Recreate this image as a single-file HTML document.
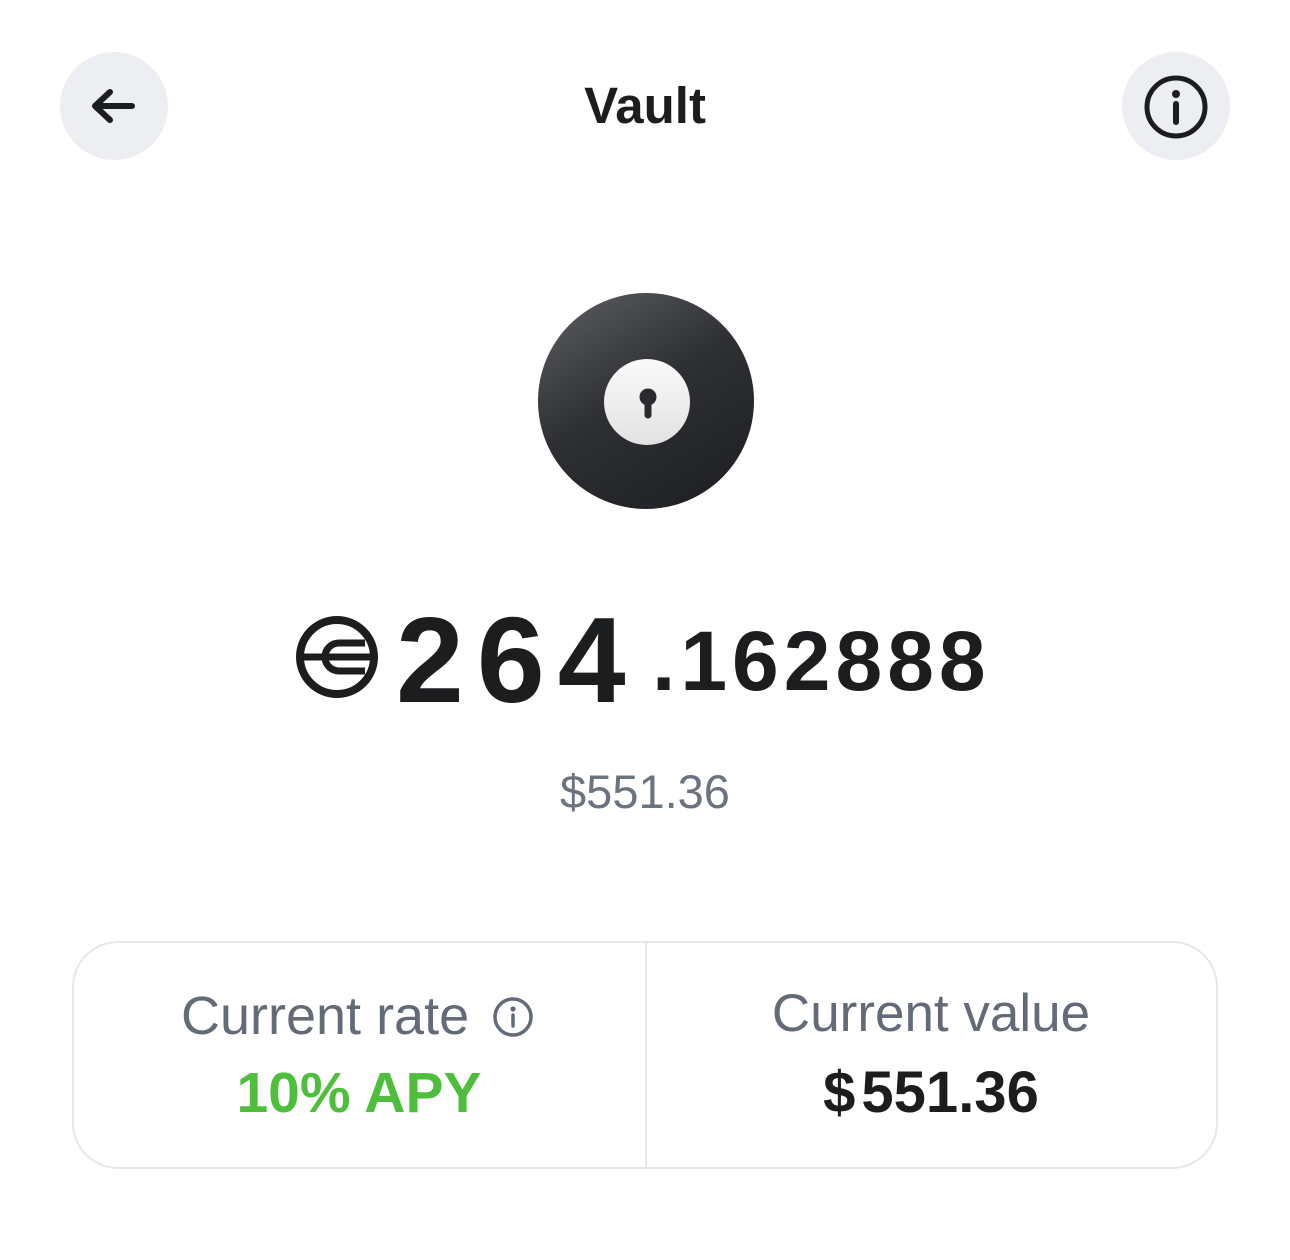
<!DOCTYPE html>
<html><head><style>
body{margin:0;width:1290px;height:1260px;background:#fff;position:relative;overflow:hidden;font-family:"Liberation Sans",sans-serif;color:#1c1d1f}
.a{position:absolute}
.t{position:absolute;white-space:nowrap;text-align:center}
</style></head><body>
<div class="a" style="left:60px;top:52px;width:108px;height:108px;border-radius:50%;background:#eceef1"></div>
<svg class="a" style="left:60px;top:52px" width="108" height="108"><path d="M35 54H72M50 40L35 54L50 68" fill="none" stroke="#1c1d1f" stroke-width="6" stroke-linecap="round" stroke-linejoin="round"/></svg>
<div class="a" style="left:1122px;top:52px;width:108px;height:108px;border-radius:50%;background:#eceef1"></div>
<svg class="a" style="left:1122px;top:52px" width="108" height="108"><circle cx="54" cy="55" r="29" fill="none" stroke="#1c1d1f" stroke-width="5"/><circle cx="54" cy="42" r="4" fill="#1c1d1f"/><path d="M54 52V70" stroke="#1c1d1f" stroke-width="6" stroke-linecap="round"/></svg>
<div class="t" style="left:0;width:1290px;top:76px;font-size:51px;font-weight:bold;line-height:60px">Vault</div>

<svg class="a" style="left:530px;top:285px" width="232" height="232">
<defs><linearGradient id="g" x1="0.2" y1="0" x2="0.8" y2="1"><stop offset="0" stop-color="#56585c"/><stop offset="0.45" stop-color="#2e3033"/><stop offset="1" stop-color="#1f2023"/></linearGradient>
<linearGradient id="w" x1="0" y1="0" x2="0" y2="1"><stop offset="0" stop-color="#fafafa"/><stop offset="1" stop-color="#e2e2e2"/></linearGradient></defs>
<circle cx="116" cy="116" r="108" fill="url(#g)"/>
<circle cx="117" cy="117" r="43" fill="url(#w)"/>
<circle cx="118" cy="112" r="8.5" fill="#2a2b2e"/>
<path d="M118 112V130" stroke="#2a2b2e" stroke-width="7" stroke-linecap="round"/>
</svg>

<svg class="a" style="left:295px;top:615px" width="86" height="86">
<circle cx="42" cy="42" r="37" fill="none" stroke="#1c1d1f" stroke-width="8"/>
<path d="M70 28H44A14 14 0 0 0 44 56H70" fill="none" stroke="#1c1d1f" stroke-width="7"/>
<path d="M8 42H76" stroke="#1c1d1f" stroke-width="7"/>
</svg>
<div class="t" style="left:396px;top:592px;font-size:122px;font-weight:bold;letter-spacing:13px;line-height:136px;text-align:left">264</div>
<div class="t" style="left:652px;top:611px;font-size:84px;font-weight:bold;letter-spacing:5px;line-height:100px;text-align:left">.162888</div>
<div class="t" style="left:0;width:1290px;top:764px;font-size:47px;color:#6b7280;line-height:56px">$551.36</div>

<div class="a" style="left:72px;top:941px;width:1142px;height:224px;border:2px solid #e5e7eb;border-radius:46px"></div>
<div class="a" style="left:645px;top:943px;width:2px;height:224px;background:#e5e7eb"></div>
<div class="t" style="left:181px;top:986px;font-size:54px;color:#646b78;line-height:60px;text-align:left">Current rate</div>
<svg class="a" style="left:490px;top:994px" width="46" height="46"><circle cx="23" cy="23" r="18" fill="none" stroke="#646b78" stroke-width="3.5"/><circle cx="23" cy="15" r="2.6" fill="#646b78"/><path d="M23 21V32" stroke="#646b78" stroke-width="3.5" stroke-linecap="round"/></svg>
<div class="t" style="left:72px;width:574px;top:1060px;font-size:57px;font-weight:bold;color:#4fbe3c;line-height:66px">10% APY</div>
<div class="t" style="left:646px;width:570px;top:984px;font-size:53px;color:#646b78;line-height:60px">Current value</div>
<div class="t" style="left:646px;width:570px;top:1060px;font-size:58px;font-weight:bold;line-height:66px">$<span style="margin-left:6px">551.36</span></div>
</body></html>
